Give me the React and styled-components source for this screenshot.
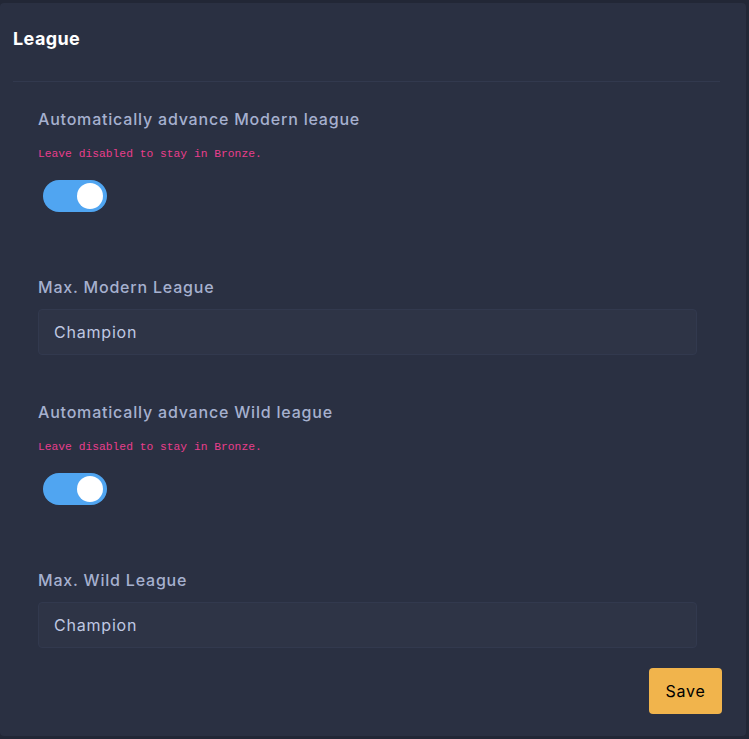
import styled, { createGlobalStyle } from "styled-components";

const GlobalStyle = createGlobalStyle`
    html, body{
        margin: 0;
        padding: 0;
        background: #222736;
    }
    body{
        font-family: 'Inter', 'Noto Sans', sans-serif;
    }
`

const StyledPage = styled.div`
    padding: 3px 3px 3px 0;
    height: 739px;
    box-sizing: border-box;
`

const StyledCard = styled.section`
    height: 100%;
    box-sizing: border-box;
    background: #2a3042;
    border-radius: 4px;
    padding: 0 24px 0 13px;
    h2{
        margin: 0;
        padding: 24px 0 0;
        height: 78px;
        box-sizing: border-box;
        font-size: 18px;
        font-weight: 700;
        letter-spacing: 0.4px;
        line-height: 24px;
        color: #ffffff;
    }
`

const StyledDivider = styled.hr`
    margin: 0 2px 0 0;
    border: 0;
    border-top: 1px solid #32394e;
`

const StyledForm = styled.form`
    padding: 26px 25px 0;
`

const StyledField = styled.div`
    margin-bottom: ${({$gap}) => $gap}px;
`

const StyledLabel = styled.label`
    display: block;
    font-size: 16px;
    font-weight: 500;
    letter-spacing: 0.8px;
    line-height: 22px;
    color: #a6b0cf;
    margin-bottom: ${({$hint}) => $hint ? 16 : 11}px;
`

const StyledHint = styled.p`
    margin: 0 0 18px;
    font-family: 'Liberation Mono', monospace;
    font-size: 11.3px;
    line-height: 16px;
    color: #e83e8c;
`

const StyledSwitch = styled.button`
    display: block;
    margin-left: 5px;
    width: 64px;
    height: 32px;
    border: 0;
    padding: 0;
    border-radius: 16px;
    background: #50a5f1;
    position: relative;
    cursor: pointer;
    &::after{
        content: '';
        position: absolute;
        top: 3px;
        right: 4px;
        width: 26px;
        height: 26px;
        border-radius: 50%;
        background: #fff;
    }
`

const StyledSelect = styled.div`
    height: 46px;
    box-sizing: border-box;
    display: flex;
    align-items: center;
    padding: 0 15px;
    background: #2e3446;
    border: 1px solid #32394e;
    border-radius: 4px;
    font-size: 16px;
    letter-spacing: 0.8px;
    color: #bfc8e2;
`

const StyledFooter = styled.div`
    display: flex;
    justify-content: flex-end;
    margin-right: -25px;
`

const StyledButton = styled.button`
    width: 73px;
    height: 46px;
    border: 0;
    border-radius: 4px;
    background: #f1b44c;
    color: #000;
    font-family: inherit;
    font-size: 16px;
    letter-spacing: 0.8px;
    cursor: pointer;
`

const ToggleField = ({label}) => {
    return(
        <StyledField $gap={64}>
            <StyledLabel $hint>{label}</StyledLabel>
            <StyledHint>Leave disabled to stay in Bronze.</StyledHint>
            <StyledSwitch type="button" aria-pressed="true" />
        </StyledField>
    )
}

const SelectField = ({label, value, gap}) => {
    return(
        <StyledField $gap={gap}>
            <StyledLabel>{label}</StyledLabel>
            <StyledSelect>{value}</StyledSelect>
        </StyledField>
    )
}

const App = () => {
    return(
        <StyledPage>
            <GlobalStyle />
            <StyledCard>
                <h2>League</h2>
                <StyledDivider />
                <StyledForm onSubmit={(e) => e.preventDefault()}>
                    <ToggleField label="Automatically advance Modern league" />
                    <SelectField label="Max. Modern League" value="Champion" gap={46} />
                    <ToggleField label="Automatically advance Wild league" />
                    <SelectField label="Max. Wild League" value="Champion" gap={20} />
                    <StyledFooter>
                        <StyledButton type="submit">Save</StyledButton>
                    </StyledFooter>
                </StyledForm>
            </StyledCard>
        </StyledPage>
    )
}

export default App;
